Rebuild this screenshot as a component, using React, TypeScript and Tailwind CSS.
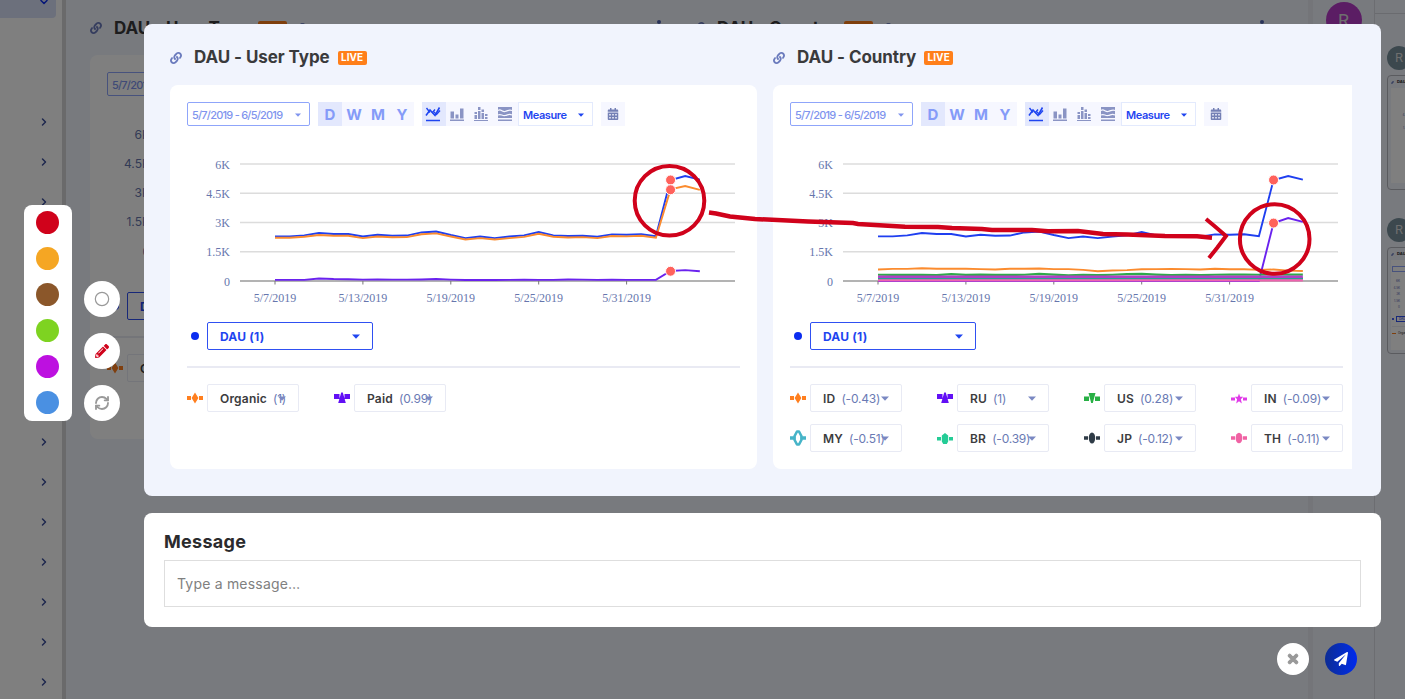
import React, { useState } from "react";
import { Circle, ChevronRight, ChevronDown, RefreshCw } from "lucide-react";
import {
  FaLink,
  FaPencilAlt,
  FaPaperPlane,
  FaCalendarAlt,
  FaQuestionCircle,
  FaTimes,
} from "react-icons/fa";

type Series = { color: string; values: number[]; width?: number };
type Dot = { index: number; value: number };
type Item = { name: string; value: string; marker: string };
type PanelData = {
  title: string;
  series: Series[];
  dots: Dot[];
  items: Item[];
};

const total = [
  2.29, 2.29, 2.34, 2.46, 2.41, 2.41, 2.28, 2.37, 2.32, 2.33, 2.49, 2.54, 2.36,
  2.2, 2.28, 2.2, 2.28, 2.34, 2.51, 2.34, 2.31, 2.32, 2.27, 2.39, 2.37, 2.4,
  2.3, 5.18, 5.38, 5.2,
];
const organic = [
  2.22, 2.22, 2.27, 2.36, 2.32, 2.32, 2.2, 2.28, 2.24, 2.25, 2.4, 2.44, 2.28,
  2.13, 2.2, 2.13, 2.2, 2.26, 2.42, 2.27, 2.23, 2.25, 2.2, 2.31, 2.29, 2.32,
  2.22, 4.7, 4.87, 4.67,
];
const paid = [
  0.06, 0.06, 0.06, 0.13, 0.1, 0.09, 0.07, 0.08, 0.07, 0.07, 0.08, 0.1, 0.07,
  0.05, 0.06, 0.05, 0.06, 0.07, 0.06, 0.06, 0.08, 0.07, 0.06, 0.07, 0.06, 0.06,
  0.06, 0.51, 0.56, 0.5,
];
const indonesia = [
  0.59, 0.62, 0.62, 0.65, 0.63, 0.63, 0.63, 0.61, 0.59, 0.63, 0.63, 0.64, 0.61,
  0.61, 0.57, 0.5, 0.54, 0.56, 0.6, 0.61, 0.62, 0.61, 0.59, 0.63, 0.6, 0.6,
  0.57, 0.59, 0.53, 0.51,
];
const us = [
  0.32, 0.31, 0.31, 0.31, 0.3, 0.35, 0.31, 0.33, 0.31, 0.31, 0.32, 0.37, 0.33,
  0.29, 0.31, 0.3, 0.32, 0.35, 0.37, 0.33, 0.3, 0.31, 0.3, 0.32, 0.33, 0.33,
  0.32, 0.34, 0.33, 0.33,
];
const russia = total.map((_, i) => (i < 27 ? 0 : [2.97, 3.23, 3.03][i - 27]));
const flat = (value: number) => total.map(() => value);

const panels: PanelData[] = [
  {
    title: "DAU - User Type",
    series: [
      { color: "#1f3ff0", values: total },
      { color: "#fb8b2e", values: organic },
      { color: "#6a22ee", values: paid },
    ],
    dots: [
      { index: 27, value: 5.18 },
      { index: 27, value: 4.68 },
      { index: 27, value: 0.5 },
    ],
    items: [
      { name: "Organic", value: "(1)", marker: "orange" },
      { name: "Paid", value: "(0.99)", marker: "violet" },
    ],
  },
  {
    title: "DAU - Country",
    series: [
      { color: "#1f3ff0", values: total },
      { color: "#fb8b2e", values: indonesia },
      { color: "#6a22ee", values: russia },
      { color: "#2fa84a", values: us, width: 2.2 },
      { color: "#3a4a78", values: flat(0.14) },
      { color: "#2c9c94", values: flat(0.11) },
      { color: "#b13fc9", values: flat(0.22), width: 2.4 },
      { color: "#f062ae", values: flat(0.03), width: 2.2 },
    ],
    dots: [
      { index: 27, value: 5.18 },
      { index: 27, value: 2.97 },
    ],
    items: [
      { name: "ID", value: "(-0.43)", marker: "orange" },
      { name: "RU", value: "(1)", marker: "violet" },
      { name: "US", value: "(0.28)", marker: "green" },
      { name: "IN", value: "(-0.09)", marker: "magenta" },
      { name: "MY", value: "(-0.51)", marker: "teal" },
      { name: "BR", value: "(-0.39)", marker: "mint" },
      { name: "JP", value: "(-0.12)", marker: "dark" },
      { name: "TH", value: "(-0.11)", marker: "pink" },
    ],
  },
];

const palette = [
  { name: "red", className: "bg-[#d0021b]" },
  { name: "orange", className: "bg-[#f5a623]" },
  { name: "brown", className: "bg-[#8b572a]" },
  { name: "green", className: "bg-[#7ed321]" },
  { name: "purple", className: "bg-[#bd10e0]" },
  { name: "blue", className: "bg-[#4a90e2]" },
];

const yLabels = ["0", "1.5K", "3K", "4.5K", "6K"];
const xLabels = ["5/7/2019", "5/13/2019", "5/19/2019", "5/25/2019", "5/31/2019"];

const px = (i: number) => 88 + i * 14.65;
const py = (v: number) => 141 - v * 19.5;

const Marker = ({ type }: { type: string }) => (
  <svg width="16" height="16" viewBox="0 0 16 16" className="shrink-0">
    {type === "orange" && (
      <g fill="#ff7f1f">
        <path d="M0 6h4v4H0zM12 6h4v4h-4zM8 2.5l3.4 5.5L8 13.5 4.6 8z" />
      </g>
    )}
    {type === "violet" && (
      <g fill="#6210f5">
        <path d="M0 4h5.500v5H0zM10.500 4H16v5h-5.500zM7.200 2.500h1.600l3 10.500H4.200z" />
      </g>
    )}
    {type === "green" && (
      <g fill="#28b045">
        <path d="M0 6.500h5v4.500H0zM11 6.500h5v4.500h-5zM4.500 3h7L8.800 13H7.200z" />
      </g>
    )}
    {type === "magenta" && (
      <g fill="#e03be8">
        <path d="M0 7.500h4v3H0zM12 7.500h4v3h-4z" />
        <path d="M8 3.500l1.200 3.300h3L9.900 9.200l.9 4.300L8 11.200l-2.800 2.300.9-4.300L3.800 6.800h3z" />
      </g>
    )}
    {type === "teal" && (
      <g fill="none" stroke="#46b4c8">
        <path d="M0 8h4M12 8h4" strokeWidth="3.600" />
        <path
          d="M7 1.500h2l2.400 4.500v4L9 14.500H7L4.600 10V6z"
          strokeWidth="2.600"
          strokeLinejoin="round"
        />
      </g>
    )}
    {type === "mint" && (
      <g fill="#24cc96">
        <path d="M0 7h4v3.500H0zM12 7h4v3.500h-4zM8 3l3.200 2.500v6L9.800 14H6.200l-1.400-2.500v-6z" />
      </g>
    )}
    {type === "dark" && (
      <g fill="#2f3b47">
        <path d="M0 6.200h4v3.600H0zM12 6.200h4v3.600h-4z" />
        <ellipse cx="8" cy="8" rx="3.200" ry="5.500" />
      </g>
    )}
    {type === "pink" && (
      <g fill="#f062a4">
        <path d="M0 6.200h4v3.600H0zM12 6.200h4v3.600h-4z" />
        <ellipse cx="8" cy="8" rx="3.400" ry="5.200" />
      </g>
    )}
  </svg>
);

const Caret = ({ className }: { className?: string }) => (
  <svg width="8" height="5" viewBox="0 0 8 5" className={className}>
    <path d="M0 0.500h8L4 4.800z" fill="currentColor" />
  </svg>
);

const LineIcon = () => (
  <svg width="16" height="16" viewBox="0 0 16 16" fill="none" stroke="#1f45f0">
    <path d="M1 9.500L5 4L10 9.500L14.500 1.500" strokeWidth="1.600" />
    <path
      d="M1.500 2L5 6.500M7 7L10 3.500M9 6L11.500 8.500L15 4.500"
      strokeWidth="1.400"
    />
    <path d="M1 14.500h14" strokeWidth="1.500" />
  </svg>
);

const BarIcon = () => (
  <svg width="16" height="16" viewBox="0 0 16 16" fill="#8a94c4">
    <path d="M1.500 5.500h3.500v7H1.500zM6.500 8.500h3v4h-3zM11 2.500h3.500v10H11zM1 13.500h14v1.500H1z" />
  </svg>
);

const StackIcon = () => (
  <svg width="16" height="16" viewBox="0 0 16 16" fill="#8a94c4">
    <path d="M1.500 9h2.500v4H1.500zM1.500 6h2.500v2H1.500zM5 5h2.500v8H5zM5 1h2.500v3H5zM8.500 7h2.500v6H8.500zM8.500 3.500h2.500V6H8.500zM12 11h2.500v2H12zM12 8h2.500v2H12zM1 14h14v1H1z" />
  </svg>
);

const AreaIcon = () => (
  <svg width="16" height="16" viewBox="0 0 16 16">
    <path d="M1 1h14v11H1zM1 13.500h14V15H1z" fill="#8a94c4" />
    <path
      d="M1 4.500c3-2 4 1.500 7 1 3-.5 4-2.500 7-1M1 9c3-1.500 4 1 7 .5s4-2 7-.5"
      stroke="#f7f8ff"
      strokeWidth="1.200"
      fill="none"
    />
  </svg>
);

const Chart = ({ data, serif }: { data: PanelData; serif: boolean }) => (
  <svg
    width="553"
    height="170"
    viewBox="0 0 553 170"
    className={
      serif
        ? "font-['Liberation_Serif',serif] text-[12px]"
        : "font-[Inter,sans-serif] text-[12px]"
    }
  >
    {yLabels.map((label, i) => (
      <g key={label}>
        <path
          d={`M53 ${py(i * 1.5)}H548`}
          stroke={i === 0 ? "#b3b3b3" : "#dcdcdc"}
          strokeWidth={i === 0 ? 1.8 : 1.5}
        />
        <text x="43" y={py(i * 1.5) + 4.5} textAnchor="end" fill="#6676ad">
          {label}
        </text>
      </g>
    ))}
    {xLabels.map((label, i) => (
      <g key={label}>
        <path d={`M${px(i * 6)} 141v3.500`} stroke="#777" />
        <text x={px(i * 6)} y="162" textAnchor="middle" fill="#6676ad">
          {label}
        </text>
      </g>
    ))}
    {data.series.map((s) => (
      <polyline
        key={s.color}
        points={s.values.map((v, i) => `${px(i)},${py(v)}`).join(" ")}
        fill="none"
        stroke={s.color}
        strokeWidth={s.width || 1.9}
      />
    ))}
    {data.dots.map((d) => (
      <circle
        key={d.value}
        cx={px(d.index)}
        cy={py(d.value)}
        r="5"
        fill="#ff625c"
        stroke="#fff"
        strokeWidth="1"
      />
    ))}
  </svg>
);

const Toolbar = () => (
  <div className="flex h-6 gap-2">
    <div className="flex w-[123px] items-center justify-between rounded-[2px] border border-[#8fa5fa] pt-0.5 pr-2 pl-1 text-[11px] font-medium tracking-[-0.76px] whitespace-nowrap text-[#8094ee]">
      <span>5/7/2019 - 6/5/2019</span>
      <Caret className="h-[4px] w-[6px]" />
    </div>
    <div className="flex bg-[#f6f7ff] text-[15px] font-bold text-[#859bf8]">
      {["D", "W", "M", "Y"].map((d) => (
        <span
          key={d}
          className={`flex w-6 items-center justify-center pt-0.5 ${d === "D" ? "bg-[#e3e8fd]" : ""}`}
        >
          {d}
        </span>
      ))}
    </div>
    <div className="flex">
      <span className="flex w-6 items-center bg-[#e3e8fd] pl-[3px]">
        <LineIcon />
      </span>
      <span className="flex w-6 items-center bg-[#f6f7ff] pl-[3px]">
        <BarIcon />
      </span>
      <span className="flex w-6 items-center bg-[#f6f7ff] pl-[3px]">
        <StackIcon />
      </span>
      <span className="flex w-6 items-center bg-[#f6f7ff] pl-[3px]">
        <AreaIcon />
      </span>
      <div className="flex w-[75px] items-center justify-between border border-[#e3eafd] bg-white pt-0.5 pr-2 pl-1 text-[11px] font-semibold tracking-[-0.4px] text-[#1f45f0]">
        <span>Measure</span>
        <Caret className="h-[4px] w-[6px]" />
      </div>
    </div>
    <div className="flex w-6 items-center justify-center bg-[#f6f7ff]">
      <FaCalendarAlt className="text-[12px] text-[#7480b5]" />
    </div>
  </div>
);

const Panel = ({ data, snapshot }: { data: PanelData; snapshot: boolean }) => (
  <section className="w-[587px] shrink-0">
    <div className={`flex h-[55px] items-center ${snapshot ? "" : "pt-px"}`}>
      <FaLink className="text-[12px] text-[#6b7bbd]" />
      <h2 className="ml-3 pt-px text-[17px] font-bold tracking-[-0.08px] whitespace-nowrap text-[#3a3a3c]">
        {data.title}
      </h2>
      <span className="ml-2 flex h-[14px] w-[29px] items-center justify-center rounded-[2px] bg-[#ff7f1a] text-[10px] font-bold tracking-[0.1px] text-white">
        LIVE
      </span>
      {!snapshot && (
        <>
          <FaQuestionCircle className="ml-2.5 text-[11px] text-[#5468b5]" />
          <div className="mr-4 ml-auto flex flex-col gap-0.5">
            <i className="h-1 w-1 rounded-full bg-[#5468b5]" />
            <i className="h-1 w-1 rounded-full bg-[#5468b5]" />
            <i className="h-1 w-1 rounded-full bg-[#5468b5]" />
          </div>
        </>
      )}
    </div>
    <div className="h-[384px] rounded-lg bg-white px-[17px] pt-[17px]">
      <Toolbar />
      <div className="mt-3.5 h-[170px]">
        <Chart data={data} serif={snapshot} />
      </div>
      <div className="mt-3 flex items-center">
        <span className="mx-1 h-2 w-2 rounded-full bg-[#0b2df0]" />
        <div className="ml-1 flex h-7 w-[166px] items-center justify-between rounded-[2px] border border-[#2f50f2] pr-3 pl-3 text-[12px] font-bold text-[#1f45f0]">
          <span className="pt-0.5 tracking-[0.2px]">DAU (1)</span>
          <Caret />
        </div>
      </div>
      <div className="mt-4 h-0.5 bg-[#e9eaf3]" />
      <div className="mt-4 grid grid-cols-[repeat(4,147px)] gap-y-3">
        {data.items.map((item) => (
          <div key={item.name} className="flex items-center gap-1">
            <Marker type={item.marker} />
            <div className="relative flex h-7 w-[92px] items-center rounded-[2px] border border-[#e8eaf4] pt-px pl-3 text-[12px] whitespace-nowrap">
              <span className="font-semibold tracking-[0.2px] text-[#3c3c3e]">
                {item.name}
              </span>
              <span className="ml-1.5 tracking-[-0.2px] text-[#6a7ab4]">
                {item.value}
              </span>
              <Caret className="absolute right-3 text-[#7a88c2]" />
            </div>
          </div>
        ))}
      </div>
    </div>
  </section>
);

const Dashboard = ({ snapshot = false }: { snapshot?: boolean }) => (
  <div className="flex gap-4">
    {panels.map((p) => (
      <Panel key={p.title} data={p} snapshot={snapshot} />
    ))}
  </div>
);

const Sidebar = () => (
  <aside className="flex w-[66px] shrink-0 flex-col border-r-4 border-[#d4d4d6] bg-white">
    <div className="flex h-[18px] w-14 shrink-0 justify-end rounded-br bg-[#d8e0f8] pr-1.5">
      <ChevronDown className="-mt-1 size-3 text-[#0b2df0]" strokeWidth={3} />
    </div>
    <div className="mt-[84px] flex flex-col pr-3">
      {Array.from({ length: 15 }).map((_, i) => (
        <div key={i} className="flex h-10 shrink-0 items-center justify-end">
          <ChevronRight className="size-3 text-[#3c4f9c]" strokeWidth={3} />
        </div>
      ))}
    </div>
  </aside>
);

const axis = (
  <>
    <span>6K</span>
    <span>4.5K</span>
    <span>3K</span>
    <span>1.5K</span>
    <span>0</span>
  </>
);

const Thumbnail = ({ large = false }: { large?: boolean }) => (
  <div
    className={`mt-[5px] w-24 overflow-hidden rounded border border-[#b4b6be] bg-[#f1f4fd] pt-1 pl-[3px] ${large ? "h-[115px]" : "h-[107px]"}`}
  >
    <div className="flex items-center gap-[3px] text-[4px] leading-none font-bold whitespace-nowrap text-[#222]">
      <FaLink className="text-[3px] text-[#5468b5]" />
      DAU - User Type
    </div>
    {large ? (
      <div className="mt-1 h-[95px] bg-white pt-[19px] pl-2.5 text-[3px] leading-none text-[#5468b5]">
        <div className="flex w-2 flex-col gap-[3.500px] text-right">{axis}</div>
      </div>
    ) : (
      <div className="mt-1 flex h-[90px] flex-col bg-white pl-px text-[3px] leading-none text-[#5468b5]">
        <div className="mt-1.5 h-1.5 w-8 border border-[#8fa5fa]" />
        <div className="mt-2 flex w-2 flex-col gap-[3.500px] text-right">
          {axis}
        </div>
        <div className="mt-[7px] flex items-center gap-0.5 text-[#0b2df0]">
          <i className="h-0.5 w-0.5 rounded-full bg-[#0b2df0]" />
          <span className="h-1.5 w-8 border border-[#2f50f2] pt-px pl-0.5">
            DAU (1)
          </span>
        </div>
        <div className="mt-1 h-px bg-[#e9eaf3]" />
        <div className="mt-[5px] flex items-center gap-0.5 text-[#222]">
          <i className="h-px w-1 bg-[#ff7f1a]" />
          <span>Organic</span>
        </div>
      </div>
    )}
  </div>
);

const Background = () => (
  <div className="flex h-full w-full overflow-hidden bg-[#f1f4fd]">
    <Sidebar />
    <main className="w-[1242px] shrink-0 overflow-hidden pl-6">
      <Dashboard />
    </main>
    <div className="w-[5px] shrink-0 bg-[#e8eaf2]" />
    <div className="flex w-[62px] shrink-0 justify-center border-r border-[#d9dbe2] pt-0.5">
      <div className="flex size-9 items-center justify-center rounded-full bg-[#b63ac8] font-[Roboto,sans-serif] text-[18px] text-[#ddd]">
        R
      </div>
    </div>
    <div className="flex w-[120px] shrink-0 flex-col">
      <div className="h-[14px] border-b border-[#d4d6de]" />
      <div className="flex flex-col pt-8 pl-3">
        <div className="flex size-6 items-center justify-center rounded-full bg-[#78909c] font-[Roboto,sans-serif] text-[13px] text-[#ddd]">
          R
        </div>
        <Thumbnail large />
        <div className="mt-7 flex size-6 items-center justify-center rounded-full bg-[#78909c] font-[Roboto,sans-serif] text-[13px] text-[#ddd]">
          R
        </div>
        <Thumbnail />
      </div>
    </div>
  </div>
);

// hand drawn marks on top of the snapshot
const Annotations = ({ color }: { color: string }) => (
  <svg
    width="1237"
    height="472"
    viewBox="144 24 1237 472"
    fill="none"
    stroke={color}
    strokeWidth="4"
    className="absolute inset-0"
  >
    <circle cx="669.5" cy="200.700" r="34.800" />
    <circle cx="1274.700" cy="239" r="34.800" />
    <path
      d="M709 212.500L716 213.500L730 216.500L755 219L808 221.500L853 223L858 224L905 226.700L938 227L952 228L982 229L992 230L1032 230L1048 231.300L1078 231L1103 234L1127 234.400L1165 236L1197 236.300L1212 237.700"
      strokeWidth="4.500"
    />
    <path d="M1206 219L1215 226.500L1226 236L1217 248L1209 258" />
  </svg>
);

const App = () => {
  const [color] = useState("#d0021b");
  const [message, setMessage] = useState("");

  return (
    <div className="relative h-[699px] w-[1405px] overflow-hidden font-[Inter,sans-serif]">
      <Background />
      <div className="absolute inset-0 flex bg-black/50 px-6 pt-6">
        <div className="flex h-[397px] shrink-0 items-end gap-3 pr-6">
          <div className="flex w-12 flex-col rounded-lg bg-white">
            {palette.map((p) => (
              <button
                key={p.name}
                className="flex h-9 items-center justify-center pr-px pb-px"
              >
                <span className={`size-[23px] rounded-full ${p.className}`} />
              </button>
            ))}
          </div>
          <div className="flex flex-col gap-4">
            <button className="flex size-9 items-center justify-center rounded-full bg-white">
              <Circle className="size-4 text-[#999]" strokeWidth={1.8} />
            </button>
            <button className="flex size-9 items-center justify-center rounded-full bg-white">
              <FaPencilAlt className="text-[14px] text-[#d0021b]" />
            </button>
            <button className="flex size-9 items-center justify-center rounded-full bg-white">
              <RefreshCw className="size-4 text-[#999]" strokeWidth={2.8} />
            </button>
          </div>
        </div>

        <div className="flex w-[1237px] flex-col">
          <div className="relative h-[472px] overflow-hidden rounded-lg bg-[#f1f4fd] pt-1.5 pl-[26px]">
            <div className="w-[1182px] overflow-hidden">
              <Dashboard snapshot />
            </div>
            <Annotations color={color} />
          </div>

          <div className="mt-[17px] flex h-[114px] flex-col rounded-lg bg-white px-5 pt-4">
            <label
              htmlFor="message"
              className="text-[18px] leading-[25px] font-bold tracking-[0.3px] text-[#2b2b2d]"
            >
              Message
            </label>
            <input
              id="message"
              value={message}
              onChange={(e) => setMessage(e.target.value)}
              placeholder="Type a message…"
              className="mt-1.5 h-[47px] border border-[#dedede] px-3 text-[14px] tracking-[0.2px] placeholder:text-[#808080]"
            />
          </div>

          <div className="mt-4 flex justify-end gap-4 pr-6">
            <button className="flex size-8 items-center justify-center rounded-full bg-white">
              <FaTimes
                className="text-[14px] text-[#999]"
                stroke="#999"
                strokeWidth={40}
              />
            </button>
            <button className="flex size-8 items-center justify-center rounded-full bg-linear-to-r from-[#0d2c94] to-[#0029ee]">
              <FaPaperPlane className="text-[14px] text-white" />
            </button>
          </div>
        </div>
      </div>
    </div>
  );
};

export default App;
